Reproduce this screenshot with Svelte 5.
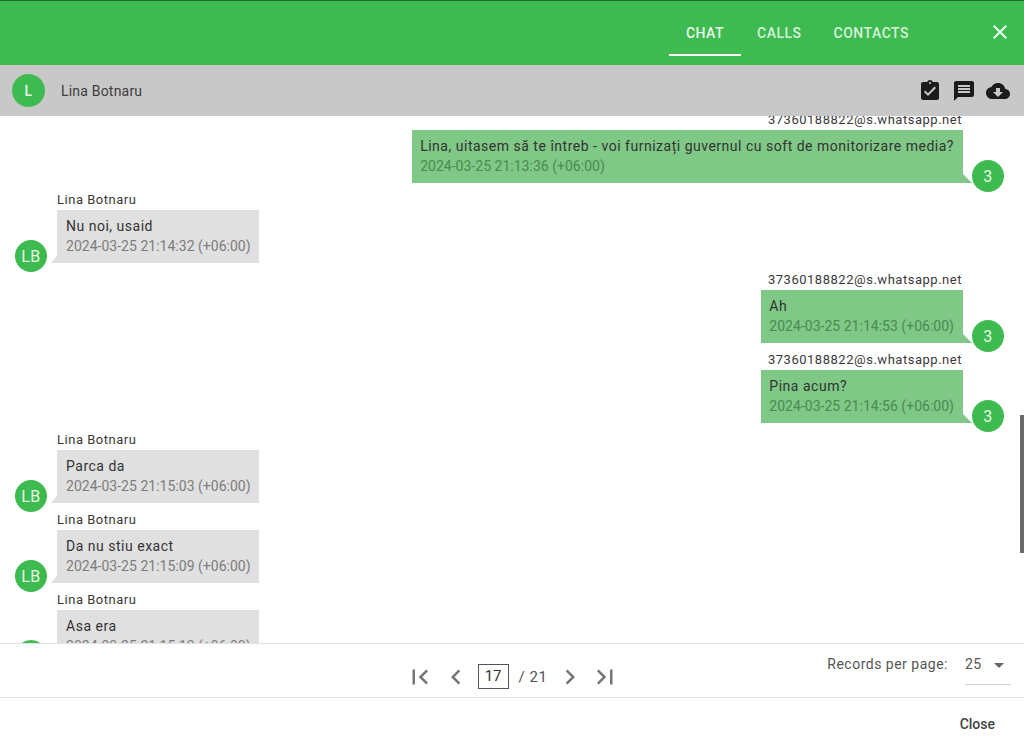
<script>
	const messages = [
		{ mine: true, text: 'Lina, uitasem să te întreb - voi furnizați guvernul cu soft de monitorizare media?', time: '2024-03-25 21:13:36 (+06:00)' },
		{ mine: false, text: 'Nu noi, usaid', time: '2024-03-25 21:14:32 (+06:00)' },
		{ mine: true, text: 'Ah', time: '2024-03-25 21:14:53 (+06:00)' },
		{ mine: true, text: 'Pina acum?', time: '2024-03-25 21:14:56 (+06:00)' },
		{ mine: false, text: 'Parca da', time: '2024-03-25 21:15:03 (+06:00)' },
		{ mine: false, text: 'Da nu stiu exact', time: '2024-03-25 21:15:09 (+06:00)' },
		{ mine: false, text: 'Asa era', time: '2024-03-25 21:15:13 (+06:00)' }
	];
</script>

<div class="dialog">
	<header class="topbar">
		<nav class="tabs">
			<span class="tab active">CHAT</span>
			<span class="tab">CALLS</span>
			<span class="tab">CONTACTS</span>
		</nav>
		<svg class="close-x" viewBox="0 0 24 24"><path d="M19 6.41L17.59 5 12 10.59 6.41 5 5 6.41 10.59 12 5 17.59 6.41 19 12 13.41 17.59 19 19 17.59 13.41 12z" /></svg>
	</header>

	<div class="subbar">
		<span class="avatar big">L</span>
		<span class="contact">Lina Botnaru</span>
		<div class="actions">
			<svg viewBox="0 0 24 24"><path d="M19 3h-4.18C14.4 1.84 13.3 1 12 1c-1.3 0-2.4.84-2.82 2H5c-1.1 0-2 .9-2 2v14c0 1.1.9 2 2 2h14c1.1 0 2-.9 2-2V5c0-1.1-.9-2-2-2zm-7 0c.55 0 1 .45 1 1s-.45 1-1 1-1-.45-1-1 .45-1 1-1zm-2 14l-4-4 1.41-1.41L10 14.17l6.59-6.59L18 9l-8 8z" /></svg>
			<svg viewBox="0 0 24 24"><path d="M20 2H4c-1.1 0-1.99.9-1.99 2L2 22l4-4h14c1.1 0 2-.9 2-2V4c0-1.1-.9-2-2-2zm-2 12H6v-2h12v2zm0-3H6V9h12v2zm0-3H6V6h12v2z" /></svg>
			<svg viewBox="0 0 24 24"><path d="M19.35 10.04C18.67 6.59 15.64 4 12 4 9.11 4 6.6 5.64 5.35 8.04 2.34 8.36 0 10.91 0 14c0 3.31 2.69 6 6 6h13c2.76 0 5-2.24 5-5 0-2.64-2.05-4.78-4.65-4.96zM17 13l-5 5-5-5h3V9h4v4h3z" /></svg>
		</div>
	</div>

	<div class="chat">
		<div class="list">
			{#each messages as m}
				<div class="msg" class:mine={m.mine}>
					{#if !m.mine}<span class="avatar">LB</span>{/if}
					<div class="body">
						<div class="sender">{m.mine ? '37360188822@s.whatsapp.net' : 'Lina Botnaru'}</div>
						<div class="bubble">
							<div class="text">{m.text}</div>
							<div class="time">{m.time}</div>
						</div>
					</div>
					{#if m.mine}<span class="avatar">3</span>{/if}
				</div>
			{/each}
		</div>
		<div class="thumb"></div>
	</div>

	<div class="pager">
		<div class="pages">
			<svg class="first" viewBox="0 0 24 24"><path d="M18.41 16.59L13.82 12l4.59-4.59L17 6l-6 6 6 6zM6 6h2v12H6z" /></svg>
			<svg class="prev" viewBox="0 0 24 24"><path d="M15.41 7.41L14 6l-6 6 6 6 1.41-1.41L10.83 12z" /></svg>
			<span class="current">17</span>
			<span class="total">/ 21</span>
			<svg class="next" viewBox="0 0 24 24"><path d="M10 6L8.59 7.41 13.17 12l-4.58 4.59L10 18l6-6z" /></svg>
			<svg class="last" viewBox="0 0 24 24"><path d="M5.59 7.41L10.18 12l-4.59 4.59L7 18l6-6-6-6zM16 6h2v12h-2z" /></svg>
		</div>
		<div class="perpage">
			<span class="perpage-label">Records per page:</span>
			<div class="select">
				<span>25</span>
				<svg viewBox="0 0 24 24"><path d="M7 10l5 5 5-5z" /></svg>
			</div>
		</div>
	</div>

	<footer class="foot">
		<span class="close-btn">Close</span>
	</footer>
</div>

<style>
	:global(body) {
		background: #fff;
	}
	.dialog {
		display: flex;
		flex-direction: column;
		height: 746px;
		overflow: hidden;
		font-family: Roboto, sans-serif;
		font-size: 14px;
		color: rgba(0, 0, 0, 0.87);
	}
	.topbar {
		flex: none;
		height: 64px;
		display: flex;
		justify-content: flex-end;
		align-items: flex-start;
		background: #3dbb50;
		border-top: 1px solid #1f6b2b;
	}
	.tabs {
		display: flex;
	}
	.tab {
		display: flex;
		align-items: center;
		height: 43px;
		padding: 10px 16px 0;
		font-weight: 500;
		letter-spacing: 0.5px;
		color: rgba(255, 255, 255, 0.8);
		border-bottom: 2px solid transparent;
	}
	.tab.active {
		color: rgba(255, 255, 255, 0.92);
		border-bottom-color: #fff;
		padding: 10px 17px 0;
	}
	.close-x {
		width: 24px;
		height: 24px;
		margin: 19px 12px 0 63px;
		fill: #e8f7ea;
	}
	.subbar {
		flex: none;
		height: 51px;
		display: flex;
		align-items: center;
		padding: 0 14px 0 12px;
		background: #c8c8c8;
	}
	.contact {
		margin-left: 16px;
		letter-spacing: 0.2px;
		color: #3d3d3d;
	}
	.actions {
		margin-left: auto;
		display: flex;
		align-items: center;
		gap: 10px;
	}
	.actions svg {
		width: 24px;
		height: 24px;
		fill: #1c1c1c;
	}
	.avatar {
		flex: none;
		display: flex;
		align-items: center;
		justify-content: center;
		width: 32px;
		height: 32px;
		border-radius: 50%;
		background: #3dbb50;
		color: #e6f7e9;
		font-size: 16px;
		letter-spacing: 0.5px;
	}
	.avatar.big {
		width: 33px;
		height: 33px;
		font-size: 14px;
		font-weight: 500;
	}
	.chat {
		position: relative;
		flex: 1 1 0;
		min-height: 0;
		overflow: hidden;
	}
	.list {
		margin-top: -6px;
		padding: 0 20px 0 15px;
	}
	.msg {
		height: 80px;
		display: flex;
		align-items: flex-start;
		gap: 10px;
	}
	.msg.mine {
		justify-content: flex-end;
		gap: 9px;
	}
	.body {
		display: flex;
		flex-direction: column;
		align-items: flex-start;
	}
	.mine .body {
		align-items: flex-end;
	}
	.msg .avatar {
		margin-top: 50px;
	}
	.sender {
		height: 20px;
		line-height: 20px;
		font-size: 13px;
		letter-spacing: 0.52px;
		color: #3a3a3a;
	}
	.mine .sender {
		padding-right: 1px;
	}
	.bubble {
		position: relative;
		height: 53px;
		box-sizing: border-box;
		padding: 6px 8px 6px 9px;
		background: #e0e0e0;
	}
	.mine .bubble {
		padding: 6px 9px 6px 8px;
		background: #7fc885;
	}
	.bubble::after {
		content: '';
		position: absolute;
		bottom: 0;
		left: -6px;
		border-style: solid;
		border-width: 0 0 7px 6px;
		border-color: transparent transparent #e0e0e0 transparent;
	}
	.mine .bubble::after {
		left: auto;
		right: -9px;
		border-width: 0 9px 9px 0;
		border-color: transparent transparent #7fc885 transparent;
	}
	.text {
		line-height: 20px;
		letter-spacing: 0.51px;
		color: #333;
	}
	.time {
		line-height: 20px;
		letter-spacing: 0.02px;
		color: #7d7d7d;
	}
	.mine .time {
		color: #4b8a54;
	}
	.thumb {
		position: absolute;
		top: 299px;
		right: 0;
		width: 4px;
		height: 138px;
		background: #6b6b6b;
	}
	.pager {
		position: relative;
		flex: none;
		height: 53px;
		display: flex;
		justify-content: center;
		align-items: center;
		border-top: 1px solid #e2e2e2;
		border-bottom: 1px solid #e6e6e6;
	}
	.pages {
		display: flex;
		align-items: center;
		color: #555;
		margin: 12px 0 0 1px;
	}
	.pages svg {
		width: 30px;
		height: 30px;
		fill: #757575;
	}
	.prev {
		margin-left: 6px;
	}
	.current {
		box-sizing: border-box;
		width: 31px;
		height: 25px;
		line-height: 23px;
		margin-left: 7px;
		text-align: center;
		border: 1px solid #555;
		font-size: 15px;
		color: #333;
	}
	.total {
		margin-left: 10px;
		font-size: 15px;
		letter-spacing: 0.5px;
	}
	.next {
		margin-left: 8px;
	}
	.last {
		margin-left: 5px;
	}
	.perpage {
		position: absolute;
		top: 0;
		right: 13px;
		display: flex;
		align-items: flex-start;
		height: 41px;
		color: #555;
	}
	.perpage-label {
		margin-top: 12px;
		letter-spacing: 0.5px;
	}
	.select {
		display: flex;
		margin-left: 17px;
		width: 46px;
		height: 41px;
		box-sizing: border-box;
		padding-top: 12px;
		letter-spacing: 0.5px;
		border-bottom: 1px solid #d4d4d4;
	}
	.select svg {
		width: 24px;
		height: 24px;
		margin: -3px 0 0 5px;
		fill: #666;
	}
	.foot {
		flex: none;
		height: 48px;
		box-sizing: border-box;
		display: flex;
		justify-content: flex-end;
		padding: 18px 29px 0 0;
	}
	.close-btn {
		font-weight: 500;
		color: #444;
	}
</style>
